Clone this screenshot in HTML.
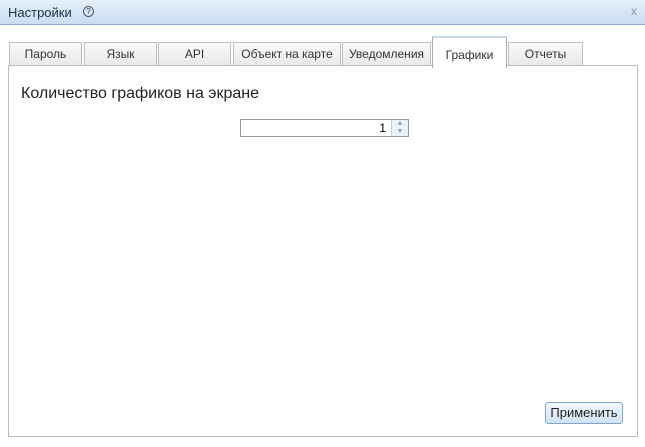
<html><head><style>
body{margin:0;width:645px;height:447px;background:#fff;font-family:"Liberation Sans",sans-serif;position:relative;overflow:hidden}
.t{position:absolute;left:0;top:0;width:645px;height:24px;background:linear-gradient(#e6f0fb,#c7dcf3);border-bottom:1px solid #8fb0d6;font-size:13px;color:#1f2f44}
.tab{position:absolute;top:42px;height:22px;border:1px solid #bfbfbf;border-bottom:none;background:linear-gradient(#fafafa,#e9e9e9);font-size:12px;color:#333;text-align:center;line-height:22px}
.panel{position:absolute;left:8px;top:65px;width:628px;height:370px;border:1px solid #bcbcbc}
</style></head><body>
<div class="t"><span style="position:absolute;left:8px;top:5px">Настройки</span><span style="position:absolute;left:83px;top:6px;width:9px;height:9px;border:1px solid #556;border-radius:50%;font-size:8px;line-height:9px;text-align:center">?</span><span style="position:absolute;right:8px;top:4px;color:#999;font-size:12px">x</span></div>
<div class="panel"></div>
<div class="tab" style="left:9px;width:71px">Пароль</div>
<div class="tab" style="left:84px;width:71px">Язык</div>
<div class="tab" style="left:158px;width:71px">API</div>
<div class="tab" style="left:233px;width:106px">Объект на карте</div>
<div class="tab" style="left:342px;width:87px">Уведомления</div>
<div class="tab" style="left:432px;top:36px;height:30px;line-height:34px;width:73px;background:#fff;border-color:#aab;border-top:2px solid #c8d8ea;z-index:2">Графики</div>
<div class="tab" style="left:508px;width:73px">Отчеты</div>
<div style="position:absolute;left:21px;top:85px;font-size:16px;color:#222">Количество графиков на экране</div>
<div style="position:absolute;left:240px;top:119px;width:145px;height:16px;border:1px solid #999;font-size:12px;text-align:right;line-height:16px;padding-right:22px">1</div>
<div style="position:absolute;left:391px;top:120px;width:16px;height:16px;background:#eef2f7;border-left:1px solid #ccc;font-size:7px;color:#8aa;text-align:center;line-height:8px">▲<br>▼</div>
<div style="position:absolute;left:545px;top:402px;width:76px;height:20px;border:1px solid #7fa6cf;border-radius:3px;background:linear-gradient(#f2f8fe,#cfe3f7);font-size:13px;text-align:center;line-height:20px;color:#222">Применить</div>
</body></html>
